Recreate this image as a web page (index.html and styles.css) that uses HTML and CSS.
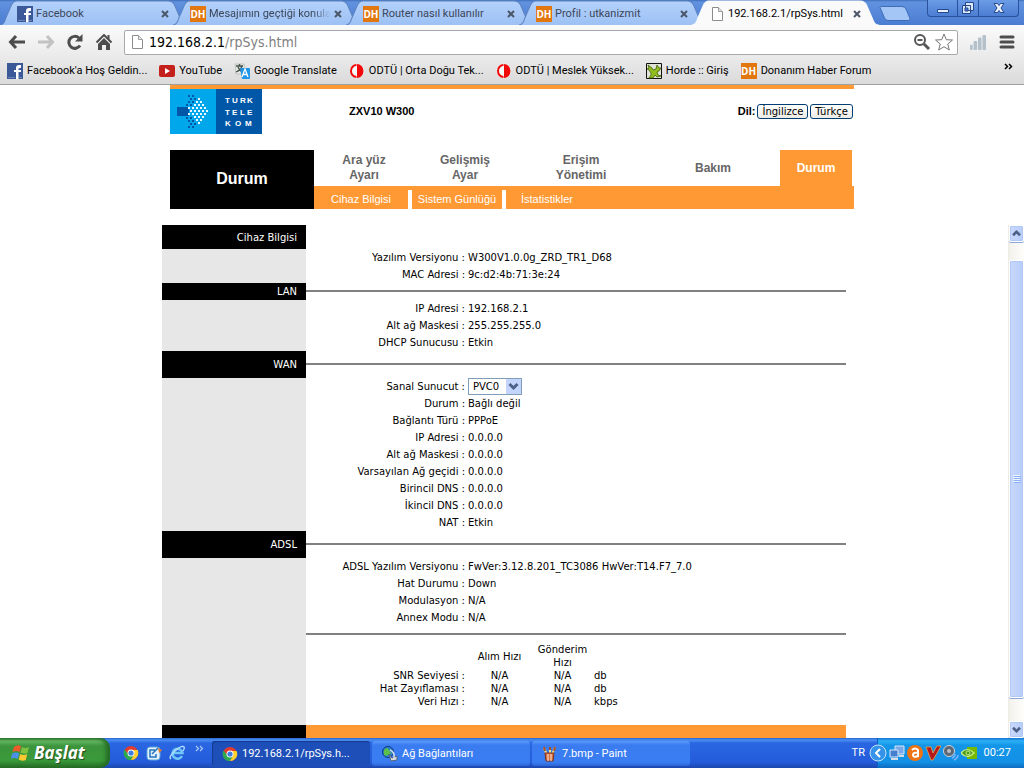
FILE: index.html
```html
<!DOCTYPE html>
<html lang="tr">
<head>
<meta charset="utf-8">
<title>192.168.2.1/rpSys.html</title>
<link rel="stylesheet" href="styles.css">
</head>
<body>
<svg class="defs" aria-hidden="true">
  <defs>
    <linearGradient id="tabBlue" x1="0" y1="0" x2="0" y2="1"><stop offset="0" stop-color="#b3d1fb"/><stop offset="1" stop-color="#9dc1f5"/></linearGradient>
    <symbol id="shape" viewBox="0 0 188 24" preserveAspectRatio="none">
      <path d="M0 24C4 24 5 20 6 17L11 6Q13 1 17 1H169Q174 1 176 6L181 17C183 22 184 24 188 24"/>
    </symbol>
    <symbol id="fb" viewBox="0 0 16 16"><path fill="#3b5998" d="M0 0h16v16H0z"/><path fill="#fff" d="M9 16V9H7V7h2V5q0-3 3-3h2v3h-1q-1.500 0-1.500 1v1H14v2h-2.500v7z"/><path fill="#6d84b4" d="M1 14h7v1H1zM12 14h3v1h-3z"/></symbol>
    <symbol id="page" viewBox="0 0 16 16"><path fill="#fff" stroke="#8c8c8c" d="M3.500 1.500h6l4 4v9h-10z"/><path fill="#e4e4e4" stroke="#a0a0a0" d="M9.500 1.500v4h4"/></symbol>
    <symbol id="close" viewBox="0 0 8 8"><path d="M1 1l6 6M7 1L1 7" stroke="#4b5768" stroke-width="2"/></symbol>
    <symbol id="odtu" viewBox="0 0 16 16"><circle cx="8" cy="8" r="7" fill="#f5fbfb"/><path d="M7.500 1a6.500 7 0 000 14v-2a4.500 5 0 010-10zM8 1a6.500 7 0 010 14z" fill="#f20a0a"/></symbol>
    <symbol id="chrome" viewBox="0 0 16 16"><circle cx="8" cy="8" r="7" fill="#e33b2e"/><path d="M1.600 4.500A7 7 0 008 15l3-5H6z" fill="#2da94f"/><path d="M14.600 5A7 7 0 018 15l3.500-6L9 5z" fill="#fdd22f"/><circle cx="8" cy="8" r="3.500" fill="#fff"/><circle cx="8" cy="8" r="2.600" fill="#3d7de0"/></symbol>
  </defs>
</svg>

<header class="browser">
  <div class="tabstrip">
    <nav class="tabs" aria-label="Sekmeler">
      <div class="tab"><svg class="tab-shape"><use href="#shape"/></svg><svg class="icon"><use href="#fb"/></svg><span class="tab-title">Facebook</span><button class="tab-close" aria-label="Kapat"><svg><use href="#close"/></svg></button></div>
      <div class="tab"><svg class="tab-shape"><use href="#shape"/></svg><span class="dh">DH</span><span class="tab-title fading">Mesajımın geçtiği konular</span><button class="tab-close" aria-label="Kapat"><svg><use href="#close"/></svg></button></div>
      <div class="tab"><svg class="tab-shape"><use href="#shape"/></svg><span class="dh">DH</span><span class="tab-title">Router nasıl kullanılır</span><button class="tab-close" aria-label="Kapat"><svg><use href="#close"/></svg></button></div>
      <div class="tab"><svg class="tab-shape"><use href="#shape"/></svg><span class="dh">DH</span><span class="tab-title">Profil : utkanizmit</span><button class="tab-close" aria-label="Kapat"><svg><use href="#close"/></svg></button></div>
      <div class="tab active"><svg class="tab-shape"><use href="#shape"/></svg><svg class="icon"><use href="#page"/></svg><span class="tab-title">192.168.2.1/rpSys.html</span><button class="tab-close" aria-label="Kapat"><svg><use href="#close"/></svg></button></div>
      <button class="new-tab" aria-label="Yeni sekme"><svg viewBox="0 0 32 16"><path d="M1 1.500Q1 .5 3 .5H23Q26 .5 27 3L31 12.500Q31.500 14.500 29 14.500H9Q6.500 14.500 5.500 12z" fill="#a3c6f7" stroke="#3f6cb4"/></svg></button>
    </nav>
    <div class="window-buttons">
      <button class="win-min" aria-label="Küçült"><svg viewBox="0 0 14 14"><path d="M1.500 8.500h11v3h-11z" fill="#e9f0fc" stroke="#24488c"/></svg></button>
      <button class="win-restore" aria-label="Geri yükle"><svg viewBox="0 0 14 14"><path d="M4.500 1.500h8v8h-8zM1.500 4.500h8v8h-8z" fill="#dce8fa" stroke="#24488c"/><path d="M4 7h3v3H4z" fill="#4a7bd0" stroke="#24488c"/></svg></button>
      <button class="win-close" aria-label="Pencereyi kapat"><svg viewBox="0 0 14 14"><path d="M2 2.500h3.500l1.500 2 1.500-2H12L9 7l3 4.500H8.500L7 9.500l-1.500 2H2L5 7z" fill="#e9f0fc" stroke="#24488c"/></svg></button>
    </div>
  </div>

  <div class="toolbar">
    <button class="tool" aria-label="Geri"><svg viewBox="0 0 18 16"><path d="M8 2L2.500 8 8 14M3 8h14" fill="none" stroke="#4d4d4d" stroke-width="3"/></svg></button>
    <button class="tool" aria-label="İleri"><svg viewBox="0 0 18 16"><path d="M10 2l5.500 6L10 14M15 8H1" fill="none" stroke="#c2c2c2" stroke-width="3"/></svg></button>
    <button class="tool" aria-label="Yenile"><svg viewBox="0 0 18 16"><path d="M14 11.500A6 6 0 1113 4" fill="none" stroke="#4d4d4d" stroke-width="3"/><path d="M16.500 0v7.500H9z" fill="#4d4d4d"/></svg></button>
    <button class="tool" aria-label="Ana sayfa"><svg viewBox="0 0 18 16"><path d="M1.500 8.500L9 1l7.500 7.500" fill="none" stroke="#4d4d4d" stroke-width="2"/><path d="M12.500 1h2v4h-2zM9 4l6 6v6h-4v-5H7v5H3v-6z" fill="#4d4d4d"/></svg></button>
    <div class="omnibox">
      <svg class="icon"><use href="#page"/></svg>
      <a class="url" href="#"><b>192.168.2.1</b>/rpSys.html</a>
      <button class="box-tool" aria-label="Yakınlaştırma"><svg viewBox="0 0 18 18"><circle cx="7" cy="7" r="5" fill="#fff" stroke="#565656" stroke-width="2"/><path d="M4.500 7h5" stroke="#565656" stroke-width="2"/><path d="M11 11l5 5" stroke="#565656" stroke-width="3"/></svg></button>
      <button class="box-tool" aria-label="Yer işareti ekle"><svg viewBox="0 0 18 18"><path d="M9 1l2.300 5.700 6.200.3-4.800 4 1.600 6L9 13.700 3.700 17l1.600-6L.5 7l6.200-.3z" fill="#fff" stroke="#777"/></svg></button>
    </div>
    <button class="tool" aria-label="Eklenti"><svg viewBox="0 0 18 18"><g fill="#b4c0ca"><rect x="0" y="12" width="3" height="6" rx="1"/><rect x="4" y="8" width="4" height="10" rx="1"/><rect x="9" y="4" width="4" height="14" rx="1"/><rect x="14" y="1" width="4" height="17" rx="1"/></g></svg></button>
    <button class="tool" aria-label="Menü"><svg viewBox="0 0 18 16"><path d="M3 3h12M3 8h12M3 13h12" stroke="#4d4d4d" stroke-width="3" stroke-linecap="round"/></svg></button>
  </div>

  <nav class="bookmarks" aria-label="Yer işaretleri">
    <a href="#" class="mark"><svg class="icon"><use href="#fb"/></svg>Facebook'a Hoş Geldin...</a>
    <a href="#" class="mark"><svg class="icon" viewBox="0 0 16 16"><rect y="2" width="16" height="12" rx="2" fill="#c4201c"/><path d="M6 5l5 3-5 3z" fill="#fff"/></svg>YouTube</a>
    <a href="#" class="mark"><svg class="icon" viewBox="0 0 16 16"><path d="M1 1h9l2 10H2z" fill="#e6e9e6" stroke="#9aa39a" stroke-width=".5"/><path d="M2 3h7M5.500 1v2M8 3q-1 4-6 6M4 4q1 3 4 5" fill="none" stroke="#44524a" stroke-width="1.300"/><path d="M6 5h9q1 0 1 1v9q0 1-1 1H8z" fill="#2196e8"/><path d="M8 14l3-8 3 8M9 11.500h4" fill="none" stroke="#fff" stroke-width="1.300"/></svg>Google Translate</a>
    <a href="#" class="mark"><svg class="icon"><use href="#odtu"/></svg>ODTÜ | Orta Doğu Tek...</a>
    <a href="#" class="mark"><svg class="icon"><use href="#odtu"/></svg>ODTÜ | Meslek Yüksek...</a>
    <a href="#" class="mark"><svg class="icon" viewBox="0 0 16 16"><path d="M.5.5h15v15H.5z" fill="#dfe2d5" stroke="#111"/><path d="M2 2l4 3 1 2 3-1 1-4 2 3 2 0-2 3-2 1 1 3 3 1-4 1-2-2-2 3-4 0 2-3 0-2-2-3-2-1 2-1z" fill="#92bd1e" stroke="#43610a" stroke-width=".8"/></svg>Horde :: Giriş</a>
    <a href="#" class="mark"><span class="dh">DH</span>Donanım Haber Forum</a>
    <button class="overflow" aria-label="Diğer yer işaretleri"><svg viewBox="0 0 9 7"><path d="M1 1l2.500 2.500L1 6M5 1l2.500 2.500L5 6" fill="none" stroke="#000" stroke-width="1.500"/></svg></button>
  </nav>
</header>

<section class="frame-top">
  <div class="site-head">
    <div class="brand-row">
      <svg class="logo" viewBox="0 0 92 45" role="img" aria-label="Türk Telekom">
        <path d="M0 0h46v45H0z" fill="#00a7eb"/><path d="M46 0h46v45H46z" fill="#0057a8"/>
        <path d="M7 18h12v9H7z" fill="#0057a8"/>
        <g fill="none" stroke-width="2" stroke-dasharray="2 2">
          <path d="M18 7h6M20 10h6M18 13h6M16 16h6M16 29h6M18 32h6M20 35h6M18 38h6" stroke="#0057a8"/>
          <path d="M28 10h2M26 13h6M24 16h10M18 19h20M20 22h20M18 25h20M24 28h10M26 31h6M28 34h2" stroke="#eaf8ff"/>
        </g>
        <g class="logo-text" fill="#fff"><text x="55 62 70 77" y="14">TURK</text><text x="55 62 70 77" y="26">TELE</text><text x="55 65 75" y="37">KOM</text></g>
      </svg>
      <strong class="model">ZXV10 W300</strong>
      <div class="language"><strong>Dil:</strong><button>İngilizce</button><button>Türkçe</button></div>
    </div>
    <div class="nav-block">
      <h1 class="nav-title">Durum</h1>
      <nav class="main-nav">
        <a href="#">Ara yüz<br>Ayarı</a>
        <a href="#">Gelişmiş<br>Ayar</a>
        <a href="#">Erişim<br>Yönetimi</a>
        <a href="#">Bakım</a>
        <a href="#" class="current">Durum</a>
      </nav>
      <nav class="sub-nav">
        <a href="#">Cihaz Bilgisi</a>
        <a href="#">Sistem Günlüğü</a>
        <a href="#">İstatistikler</a>
      </nav>
    </div>
  </div>
</section>

<div class="frame-main">
  <main class="sheet-area">
    <div class="sheet">
      <section class="group first">
        <h2>Cihaz Bilgisi</h2><span></span>
        <table class="facts">
          <tr><th scope="row">Yazılım Versiyonu :</th><td>W300V1.0.0g_ZRD_TR1_D68</td></tr>
          <tr><th scope="row">MAC Adresi :</th><td>9c:d2:4b:71:3e:24</td></tr>
        </table>
      </section>
      <section class="group compact">
        <h2>LAN</h2><hr>
        <table class="facts">
          <tr><th scope="row">IP Adresi :</th><td>192.168.2.1</td></tr>
          <tr><th scope="row">Alt ağ Maskesi :</th><td>255.255.255.0</td></tr>
          <tr><th scope="row">DHCP Sunucusu :</th><td>Etkin</td></tr>
        </table>
      </section>
      <section class="group">
        <h2>WAN</h2><hr>
        <table class="facts">
          <tr><th scope="row"><label for="pvc">Sanal Sunucut :</label></th><td><span class="picker"><select id="pvc"><option>PVC0</option></select><svg viewBox="0 0 15 15"><rect width="15" height="15" rx="1" fill="#c3d5fd"/><path d="M3.500 5l4 4 4-4" fill="none" stroke="#4d6185" stroke-width="3"/></svg></span></td></tr>
          <tr><th scope="row">Durum :</th><td>Bağlı değil</td></tr>
          <tr><th scope="row">Bağlantı Türü :</th><td>PPPoE</td></tr>
          <tr><th scope="row">IP Adresi :</th><td>0.0.0.0</td></tr>
          <tr><th scope="row">Alt ağ Maskesi :</th><td>0.0.0.0</td></tr>
          <tr><th scope="row">Varsayılan Ağ geçidi :</th><td>0.0.0.0</td></tr>
          <tr><th scope="row">Birincil DNS :</th><td>0.0.0.0</td></tr>
          <tr><th scope="row">İkincil DNS :</th><td>0.0.0.0</td></tr>
          <tr><th scope="row">NAT :</th><td>Etkin</td></tr>
        </table>
      </section>
      <section class="group">
        <h2>ADSL</h2><hr>
        <div class="adsl">
          <table class="facts">
            <tr><th scope="row">ADSL Yazılım Versiyonu :</th><td>FwVer:3.12.8.201_TC3086 HwVer:T14.F7_7.0</td></tr>
            <tr><th scope="row">Hat Durumu :</th><td>Down</td></tr>
            <tr><th scope="row">Modulasyon :</th><td>N/A</td></tr>
            <tr><th scope="row">Annex Modu :</th><td>N/A</td></tr>
          </table>
          <hr>
          <table class="rates">
            <thead><tr><td></td><th scope="col">Alım Hızı</th><th scope="col">Gönderim<br>Hızı</th><td></td></tr></thead>
            <tbody>
              <tr><th scope="row">SNR Seviyesi :</th><td>N/A</td><td>N/A</td><td class="unit">db</td></tr>
              <tr><th scope="row">Hat Zayıflaması :</th><td>N/A</td><td>N/A</td><td class="unit">db</td></tr>
              <tr><th scope="row">Veri Hızı :</th><td>N/A</td><td>N/A</td><td class="unit">kbps</td></tr>
            </tbody>
          </table>
        </div>
      </section>
      <div class="sheet-foot"></div>
    </div>
  </main>
  <div class="scrollbar">
    <button aria-label="Yukarı"><svg viewBox="0 0 15 15"><path d="M3.500 9.500l4-4 4 4" fill="none" stroke="#4d6185" stroke-width="3"/></svg></button>
    <div class="track"><div class="thumb"><svg viewBox="0 0 8 8"><path d="M0 .5h7M0 2.500h7M0 4.500h7M0 6.500h7" stroke="#eef4fe"/><path d="M1 1.500h7M1 3.500h7M1 5.500h7M1 7.500h7" stroke="#8cb0f8"/></svg></div></div>
    <button aria-label="Aşağı"><svg viewBox="0 0 15 15"><path d="M3.500 5.500l4 4 4-4" fill="none" stroke="#4d6185" stroke-width="3"/></svg></button>
  </div>
</div>

<footer class="taskbar">
  <button class="start"><svg viewBox="0 0 20 20"><path d="M3 4q4-3 7-.5L8.500 9Q5 7 1.500 9z" fill="#ef5a2b"/><path d="M11 4q3 2 7 0l-1.500 6q-4 1.500-7-.5z" fill="#7fc241"/><path d="M1.200 10.500q4-2 7 0L6.700 16q-3-2-7 0z" fill="#4a90e8"/><path d="M9.200 11q3 2 7 .3l-1.500 5.700q-4 1.500-7-.5z" fill="#fbc930"/></svg>Başlat</button>
  <div class="quick">
    <button aria-label="Chrome"><svg viewBox="0 0 16 16"><use href="#chrome"/></svg></button>
    <button aria-label="Masaüstünü göster"><svg viewBox="0 0 16 16"><rect x="1" y="2" width="13" height="13" rx="3" fill="#e3f1fb" stroke="#5aa5dc"/><path d="M9 5H4v7h6V9M6 9l6-6" fill="none" stroke="#2374bf" stroke-width="1.500"/><path d="M12 3l4 2-3 3z" fill="#e47926"/></svg></button>
    <button aria-label="Internet Explorer"><svg viewBox="0 0 16 16"><path d="M13 11a5 5 0 11.500-3H4" fill="none" stroke="#6fc6f7" stroke-width="2.500"/><path d="M2 14Q-1 12 6 6t9-4q1 1-1 4" fill="none" stroke="#b7e3fa" stroke-width="1.300"/></svg></button>
    <button class="more" aria-label="Diğer"><svg viewBox="0 0 9 7"><path d="M1 1l2.500 2.500L1 6M5 1l2.500 2.500L5 6" fill="none" stroke="#a9c8f8" stroke-width="1.200"/></svg></button>
  </div>
  <div class="tasks">
    <button class="task pressed"><svg viewBox="0 0 16 16"><use href="#chrome"/></svg>192.168.2.1/rpSys.h...</button>
    <button class="task"><svg viewBox="0 0 16 16"><circle cx="6" cy="6" r="5.500" fill="#2b7ed0" stroke="#0d3c7c"/><path d="M2 4q3-4 5 0t3 3-4 2-4-5z" fill="#5cc048"/><path d="M7 8l3 4 5-2v4l-6 1z" fill="#d8dce4" stroke="#50617c"/><path d="M8 4q5 2 4 8" fill="none" stroke="#d8dce4" stroke-width="1.500"/></svg>Ağ Bağlantıları</button>
    <button class="task"><svg viewBox="0 0 16 16"><path d="M5 9L2 2M8 9V2M10 9l3-8" stroke="#f5dc86" stroke-width="2"/><path d="M2 1l1 4M8 1v3M13 1l-1 4" stroke="#a4522c" stroke-width="2"/><path d="M3 7h9l-1 8H4z" fill="#d96f45" stroke="#7c3118"/><path d="M6 8v7M9 8v7" stroke="#f5eed9"/></svg>7.bmp - Paint</button>
  </div>
  <span class="lang">TR</span>
  <div class="tray">
    <button class="tray-toggle" aria-label="Gizli simgeler"><svg viewBox="0 0 18 18"><circle cx="9" cy="9" r="8" fill="#3593ea" stroke="#c4e2fb"/><path d="M11 5L7 9l4 4" fill="none" stroke="#fff" stroke-width="2"/></svg></button>
    <svg viewBox="0 0 16 16"><path d="M6 1h9v8H6z" fill="#77a9ea" stroke="#d9e7f7"/><path d="M1 5h8v7H1z" fill="#4480cf" stroke="#d9e7f7"/><path d="M2 14h7M10 11h5" stroke="#d5dce6" stroke-width="2"/></svg>
    <svg viewBox="0 0 16 16"><circle cx="8" cy="8" r="8" fill="#ee7414"/><path d="M5 5q3-3 6 0v7M11 8q-5-1-5 2t5 1" fill="none" stroke="#fff" stroke-width="2"/></svg>
    <svg viewBox="0 0 16 16"><path d="M1 2h5l2 6 4-7h4L8 15H6z" fill="#b3191c" stroke="#f3a33b" stroke-width=".8"/></svg>
    <svg viewBox="0 0 16 16"><circle cx="6" cy="6" r="5.500" fill="#5d6672" stroke="#cfd5dc"/><circle cx="6" cy="6" r="2" fill="#b9c1ca"/><path d="M9 13q3-1 3-4M11 15q4-2 4-5" fill="none" stroke="#7db5ff" stroke-width="1.500"/></svg>
    <svg viewBox="0 0 16 16"><path d="M6 2h10v12H6z" fill="#77b900"/><path d="M0 8q6-7 13 0-7 7-13 0z" fill="#4e9a1a" stroke="#c6ee8a" stroke-width="1.200"/><circle cx="7" cy="8" r="2" fill="none" stroke="#c6ee8a"/></svg>
    <time>00:27</time>
  </div>
</footer>
</body>
</html>
```
FILE: styles.css
```css
* { box-sizing: border-box; }
body {
  margin: 0;
  min-height: 100vh;
  display: flex;
  flex-direction: column;
  background: #fff;
  color: #000;
  font: 11px/16px Roboto, Tahoma, sans-serif;
}
a { color: inherit; text-decoration: none; }
button { font: inherit; color: inherit; margin: 0; padding: 0; border: 0; background: none; }
svg { display: block; flex: none; }
table { border-collapse: collapse; }
th, td { padding: 0; font-weight: normal; }
hr { margin: 0; border: 0; height: 2px; background: #808080; }
.defs { position: absolute; width: 0; height: 0; }
.icon { width: 16px; height: 16px; }
.dh {
  flex: none;
  width: 16px;
  height: 16px;
  background: #e2770f;
  color: #fff;
  font: bold 10px/16px "Open Sans", sans-serif;
  text-align: center;
}

/* Tab strip */
.tabstrip {
  display: flex;
  justify-content: space-between;
  height: 25px;
  background: linear-gradient(#3f6db9 0, #6192df 2px, #4a7cd2);
}
.tabs { display: flex; min-width: 0; }
.tab {
  position: relative;
  display: flex;
  align-items: center;
  gap: 3px;
  width: 187px;
  height: 25px;
  padding: 2px 14px 0 17px;
  color: #3c4658;
}
.tab + .tab { margin-left: -14px; }
.tab > * { position: relative; }
.tab .tab-shape {
  position: absolute;
  inset: 0;
  width: 100%;
  height: 100%;
  fill: url(#tabBlue);
  stroke: #5c83c0;
}
.tab.active { color: #000; }
.tab.active .tab-shape { fill: #fafafa; stroke: #fafafa; }
.tab-title {
  flex: 1;
  min-width: 0;
  overflow: hidden;
  white-space: nowrap;
}
.tab-title.fading { mask-image: linear-gradient(90deg, #000 calc(100% - 18px), transparent); }
.tab-close { padding: 4px 4px 4px 0; }
.tab-close svg { width: 8px; height: 8px; }
.new-tab { align-self: flex-start; padding-top: 6px; }
.new-tab svg { width: 32px; height: 16px; }
.window-buttons {
  display: flex;
  height: 17px;
  margin-right: 5px;
  border: 1px solid #2a529c;
  border-top: 0;
  border-radius: 0 0 4px 4px;
  background: linear-gradient(#6c9ce6, #4b7dd3);
}
.window-buttons button { display: flex; align-items: center; justify-content: center; width: 29px; }
.window-buttons button + button { border-left: 1px solid #2a529c; }
.window-buttons .win-restore { width: 21px; }
.window-buttons .win-close { width: 40px; }
.window-buttons svg { width: 14px; height: 14px; }

/* Toolbar */
.toolbar {
  display: flex;
  align-items: center;
  gap: 11px;
  height: 34px;
  padding: 0 8px;
  background: linear-gradient(#fafafa, #e9e9e9);
}
.tool svg { width: 18px; height: 16px; }
.omnibox {
  flex: 1;
  display: flex;
  align-items: center;
  gap: 4px;
  height: 25px;
  padding: 0 4px 0 4px;
  border: 1px solid #a9a9a9;
  border-radius: 2px;
  background: #fff;
}
.url { flex: 1; font-family: "DejaVu Sans Condensed", Tahoma, sans-serif; font-size: 14px; color: #808080; }
.url b { font-weight: normal; color: #000; }
.box-tool svg { width: 18px; height: 18px; }

/* Bookmarks */
.bookmarks {
  display: flex;
  align-items: center;
  gap: 12px;
  height: 26px;
  padding: 0 11px 2px 7px;
  border-bottom: 1px solid #a0a0a0;
  background: linear-gradient(#e9e9e9, #dadada);
}
.mark { display: flex; align-items: center; gap: 4px; white-space: nowrap; }
.overflow { margin-left: auto; padding-bottom: 8px; }
.overflow svg { width: 9px; height: 7px; }

/* Router header */
.site-head { max-width: 684px; margin: 0 auto; padding-bottom: 16px; border-top: 4px solid #f93; }
.brand-row {
  display: flex;
  align-items: center;
  height: 45px;
  font: 11px/13px "Liberation Sans", Arial, sans-serif;
}
.logo { width: 92px; height: 45px; }
.logo-text { font: bold 8px "Liberation Sans", Arial, sans-serif; }
.model { margin-left: 87px; }
.language { display: flex; align-items: center; gap: 2px; margin-left: auto; padding-right: 1px; }
.language button {
  height: 15px;
  padding: 0 4px;
  border: 1px solid #003c74;
  border-radius: 3px;
  background: linear-gradient(#fff, #ecebe5);
  font: 10px/13px "DejaVu Sans", Verdana, sans-serif;
}
.nav-block {
  display: grid;
  grid-template: 36px 23px / 144px 1fr;
  margin-top: 16px;
  font: 11px/15px "Liberation Sans", Arial, sans-serif;
}
.nav-title {
  grid-row: span 2;
  display: grid;
  place-items: center;
  margin: 0;
  padding-bottom: 2px;
  background: #000;
  color: #fff;
  font-size: 16px;
}
.main-nav {
  display: grid;
  grid-template-columns: 100fr 102fr 130fr 134fr 72fr;
  padding-right: 2px;
  font-size: 12px;
  font-weight: bold;
  color: #666;
  text-align: center;
}
.main-nav a { display: grid; place-content: center; }
.main-nav .current { background: #f93; color: #fff; }
.sub-nav { display: flex; border-top: 4px solid #f93; background: #f93; color: #fff; }
.sub-nav a { width: 94px; padding-top: 2px; text-align: center; }
.sub-nav a + a { border-left: 4px solid #fff; }
.sub-nav a:last-child { flex: 1; padding-left: 15px; text-align: left; }

/* Status sheet */
.frame-main { flex: 1; display: flex; }
.sheet-area { flex: 1; display: flex; justify-content: center; }
.sheet {
  flex: 1;
  max-width: 684px;
  display: flex;
  flex-direction: column;
  font: 10px/13px "DejaVu Sans", Verdana, sans-serif;
}
.group {
  display: grid;
  grid-template-columns: 144px 1fr;
  grid-template-rows: 27px auto;
  align-items: center;
  background: linear-gradient(90deg, #e7e7e7 144px, #fff 144px);
}
.group.first { grid-template-rows: 24px auto; }
.group.compact { grid-template-rows: 17px auto; }
.group > hr { margin-bottom: 1px; }
.group h2 {
  align-self: stretch;
  display: flex;
  align-items: center;
  justify-content: flex-end;
  margin: 0;
  padding-right: 9px;
  background: #000;
  color: #fff;
  font: inherit;
}
.facts, .adsl { grid-column: 2; width: 100%; }
.facts { table-layout: fixed; }
.facts tr { height: 17px; }
.facts th { width: 162px; padding-right: 3px; text-align: right; }
.picker { position: relative; display: block; width: 54px; }
.picker select {
  display: block;
  appearance: none;
  width: 100%;
  height: 17px;
  padding: 0 4px;
  border: 1px solid #7f9db9;
  border-radius: 0;
  background: #fff;
  color: #000;
  font: inherit;
}
.picker svg { position: absolute; top: 1px; right: 1px; width: 15px; height: 15px; pointer-events: none; }
.adsl { padding-bottom: 17px; }
.adsl hr { margin: 7px 0 8px; }
.rates { table-layout: fixed; width: 318px; text-align: center; }
.rates thead td:first-child { width: 162px; }
.rates thead th { width: 63px; }
.rates tbody th { padding-right: 3px; text-align: right; }
.rates .unit { text-align: left; }
.sheet-foot { flex: 1; min-height: 13px; background: linear-gradient(90deg, #000 144px, #f93 144px); }

/* Scrollbar */
.scrollbar {
  width: 16px;
  display: flex;
  flex-direction: column;
  border-left: 1px solid #eeede5;
  background: linear-gradient(90deg, #f3f1ec, #fefefb);
}
.scrollbar button, .thumb {
  border: 1px solid #fff;
  border-radius: 2px;
  background: linear-gradient(90deg, #c9d8fc, #b7cdfb);
  box-shadow: inset 0 0 0 1px #b1c7f4, 0 1px 0 #8ba8d8;
}
.scrollbar button { height: 17px; }
.scrollbar button svg { width: 13px; height: 15px; }
.track { flex: 1; display: flex; padding: 18px 0 23px; }
.thumb { flex: 1; display: grid; place-items: center; }
.thumb svg { width: 8px; height: 8px; }

/* Taskbar */
.taskbar {
  display: flex;
  height: 30px;
  color: #fff;
  background: linear-gradient(#2a62cf 0, #4a90f3 2px, #2a66e2 5px, #245cdb 80%, #1c47ad);
}
.start {
  display: flex;
  align-items: center;
  gap: 3px;
  width: 110px;
  padding-left: 11px;
  border-radius: 0 10px 10px 0;
  background: linear-gradient(#2f7a2f 0, #65b865 3px, #3c943c 8px, #3a9a3a 75%, #256b25);
  box-shadow: inset -4px 0 4px #256b25;
  font: italic bold 17px/20px "Open Sans", sans-serif;
  text-shadow: 1px 1px 1px #1d4d1d;
}
.start svg { width: 20px; height: 20px; }
.quick { display: flex; align-items: center; gap: 7px; width: 102px; padding-left: 13px; }
.quick svg { width: 16px; height: 16px; }
.quick .more { padding: 0 0 9px 3px; }
.quick .more svg { width: 9px; height: 7px; }
.tasks { flex: 1; display: flex; gap: 2px; padding: 3px 0 2px; min-width: 0; }
.task {
  flex: 0 1 158px;
  display: flex;
  align-items: center;
  gap: 4px;
  padding-left: 10px;
  border-radius: 3px;
  background: linear-gradient(#5c9bfb, #3a7cf0 4px, #3a7df2 85%, #2c65d4);
  white-space: nowrap;
}
.task svg { width: 16px; height: 16px; }
.task.pressed { background: #1e4fb8; box-shadow: inset 1px 1px 1px #163a8c; }
.lang { align-self: center; width: 25px; }
.tray {
  display: flex;
  align-items: center;
  gap: 2px;
  padding-right: 13px;
  border-left: 1px solid #0d5fc4;
  background: linear-gradient(#1572d4 0, #2cb0f5 3px, #1496e8 7px, #1290e6 80%, #0e6cc0);
}
.tray svg { width: 16px; height: 16px; }
.tray .tray-toggle { margin-left: -9px; }
.tray .tray-toggle svg { width: 18px; height: 18px; }
.tray time { margin-left: 5px; }
```
